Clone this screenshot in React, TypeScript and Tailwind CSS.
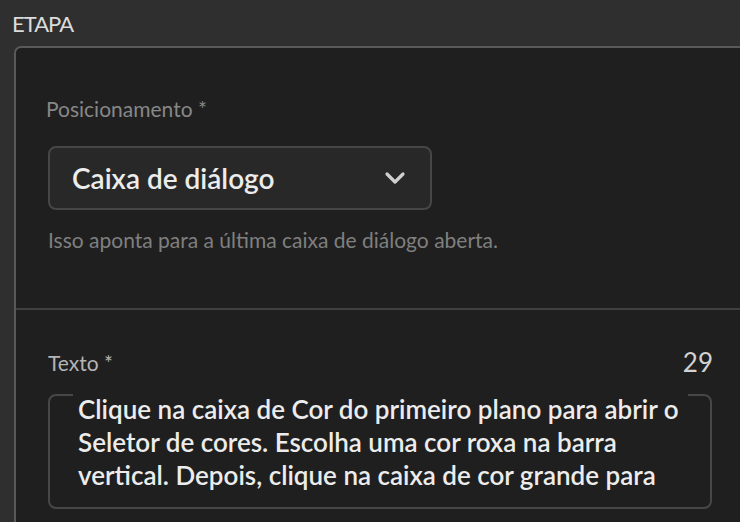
import React from "react";

export default function App() {
  return (
    <div
      className="w-[740px] h-[522px] overflow-hidden bg-[#2f2f2f] text-[#e8e8e8]"
      style={{ fontFamily: "Lato, 'Open Sans', sans-serif" }}
    >
      <div className="pl-[12px] pt-[12px] h-[46px] text-[22px] leading-[24px] text-[#dcdcdc] tracking-[-1px]">
        ETAPA
      </div>
      <div className="ml-[14px] w-[760px] border-2 border-[#595959] rounded-tl-[7px] bg-[#1f1f1f] h-[500px]">
        <div className="pl-[30px] pt-[48px] h-[260px]">
          <div className="text-[21px] leading-[26px] text-[#878787]">Posicionamento *</div>
          <div className="mt-[24px] ml-[2px] w-[384px] h-[64px] rounded-[8px] border-2 border-[#464646] bg-[#282828] flex items-center pl-[22px] pr-[24px] justify-between">
            <span className="text-[28px] font-semibold text-[#ececec]">Caixa de diálogo</span>
            <svg width="22" height="14" viewBox="0 0 22 14">
              <path d="M3 3 L11 11 L19 3" fill="none" stroke="#d0d0d0" strokeWidth="3.2" strokeLinecap="round" strokeLinejoin="round" />
            </svg>
          </div>
          <div className="mt-[17px] ml-[2px] text-[21px] leading-[26px] text-[#7f7f7f]">
            Isso aponta para a última caixa de diálogo aberta.
          </div>
        </div>
        <div className="h-[2px] bg-[#404040]" />
        <div className="pl-[32px] pt-[38px] w-[696px]">
          <div className="flex justify-between items-end">
            <span className="text-[21px] leading-[26px] text-[#b4b4b4]">Texto *</span>
            <span className="text-[26px] leading-[28px] text-[#d2d2d2] -mr-[1px]">29</span>
          </div>
          <div className="relative mt-[18px] h-[115px] rounded-[8px] border-2 border-[#474747]">
            <div className="absolute left-[23px] right-[22px] -top-[2px] h-[2px] bg-[#1f1f1f]" />
            <div className="pl-[28px] -mt-[3px] text-[26px] leading-[33px] font-semibold text-[#ececec] whitespace-nowrap">
              Clique na caixa de Cor do primeiro plano para abrir o
              <br />
              Seletor de cores. Escolha uma cor roxa na barra
              <br />
              vertical. Depois, clique na caixa de cor grande para
            </div>
          </div>
        </div>
      </div>
    </div>
  );
}
